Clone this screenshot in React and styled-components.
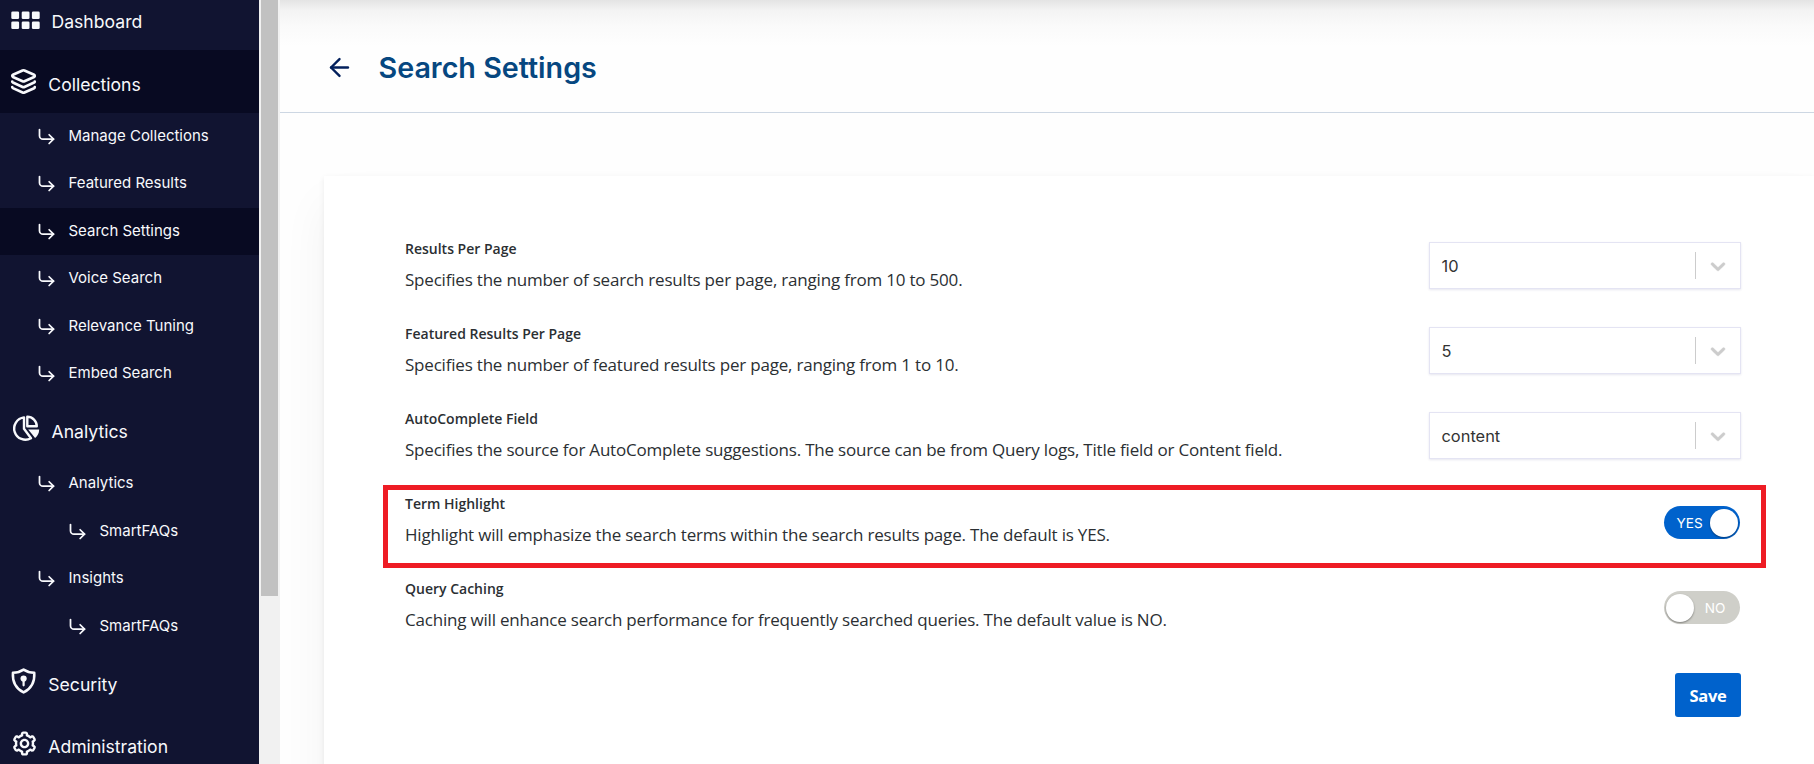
import React, { Component } from 'react'
import styled, { createGlobalStyle, css } from 'styled-components'
import { ArrowLeft, CornerDownRight, Layers } from 'lucide-react'
import { BiCog } from 'react-icons/bi'

const GlobalStyle = createGlobalStyle`
  * {
    box-sizing: border-box;
  }
  body {
    margin: 0;
    overflow: hidden;
    background: #fefefe;
    font-family: Inter, 'Liberation Sans', sans-serif;
  }
`

const Page = styled.div`
  display: flex;
  height: 764px;
  overflow: hidden;
`

const Sidebar = styled.nav`
  flex: 0 0 259px;
  overflow: hidden;
  background: #111431;
  color: #f8f9fc;
`

const MenuList = styled.div`
  margin-top: -12.5px;
`

const MenuHead = styled.div`
  display: flex;
  align-items: center;
  height: 62.5px;
  padding-left: 10px;
  background: ${p => p.$active ? '#080a22' : 'transparent'};
  font-size: 17.6px;
  line-height: 24px;
  svg {
    flex: none;
  }
`

const HeadIcon = styled.span`
  display: flex;
  flex: 0 0 ${p => p.$wide ? 41.5 : 38.3}px;
`

const HeadText = styled.span`
  padding-top: 7px;
`

const MenuItem = styled.div`
  display: flex;
  align-items: center;
  height: 47.5px;
  padding-left: ${p => p.$nested ? 66.5 : 35.5}px;
  background: ${p => p.$active ? '#080a22' : 'transparent'};
  font-size: 15px;
  line-height: 20px;
  svg {
    flex: none;
    margin-right: 12px;
  }
`

const ItemText = styled.span`
  padding-bottom: 1px;
`

const ScrollTrack = styled.div`
  flex: 0 0 21px;
  padding: 0 2px;
  background: #f1f1f1;
`

const ScrollThumb = styled.div`
  width: 17px;
  height: 596px;
  background: #c1c1c1;
`

const Main = styled.main`
  flex: 1;
  min-width: 0;
`

const Header = styled.header`
  display: flex;
  align-items: center;
  height: 113px;
  padding: 22px 0 0 45px;
  border-bottom: 1px solid #cdd7e3;
  background: linear-gradient(#e4e4e4, #f3f3f3 10px, #fafafa 25px, #fefefe 46px);
  color: #03205c;
`

const Title = styled.h1`
  margin: 2px 0 0 24.5px;
  color: #064780;
  font-size: 28.7px;
  font-weight: 600;
  line-height: 40px;
`

const Card = styled.section`
  height: 700px;
  margin: 63px 0 0 44px;
  padding: 57px 73px 0 81px;
  background: #fff;
  box-shadow: 0 28px 44px rgba(0, 0, 0, 0.05), 0 2px 6px rgba(0, 0, 0, 0.07);
`

const Row = styled.div`
  position: relative;
  display: flex;
  justify-content: space-between;
  align-items: flex-start;
  height: 85px;
  padding-top: 3px;
`

const Highlight = styled.div`
  position: absolute;
  top: -3px;
  right: -25px;
  bottom: 5px;
  left: -22px;
  border: 5px solid #ee1c24;
`

const Label = styled.div`
  color: #2b2f33;
  font: 600 14px/26px 'Open Sans', sans-serif;
`

const Description = styled.div`
  color: #2b2f33;
  font: 400 17px/36px 'Open Sans', sans-serif;
  letter-spacing: -0.2px;
  white-space: nowrap;
`

const SelectBox = styled.div`
  display: flex;
  align-items: center;
  width: 312px;
  height: 47px;
  margin-top: 6px;
  padding-left: 11.5px;
  border: 1px solid #e4e4f3;
  box-shadow: 0 1px 2px rgba(60, 60, 130, 0.12);
  background: #fff;
  color: #333;
  font-size: 16.4px;
`

const SelectValue = styled.span`
  flex: 1;
`

const Indicator = styled.span`
  display: flex;
  justify-content: center;
  align-items: center;
  width: 45px;
  height: 27px;
  border-left: 1px solid #ccc;
  svg {
    fill: #ccc;
    stroke: #ccc;
    stroke-width: 0.4;
  }
`

const Toggle = styled.div`
  display: flex;
  align-items: center;
  justify-content: space-between;
  width: 76px;
  height: 33px;
  margin: 15px 1px 0 0;
  padding: 0 2px 0 12.5px;
  border-radius: 17px;
  background: #0062cc;
  color: #fff;
  font-size: 13.6px;
  ${p => !p.$on && css`
    flex-direction: row-reverse;
    padding: 0 14.5px 0 2px;
    background: #cfcfc9;
  `}
`

const Knob = styled.span`
  width: 28px;
  height: 28px;
  border-radius: 50%;
  background: #fff;
  box-shadow: 0 1px 2px rgba(0, 0, 0, 0.4);
`

const Actions = styled.div`
  display: flex;
  justify-content: flex-end;
  padding-top: 15px;
`

const SaveButton = styled.button`
  width: 66px;
  height: 44px;
  padding: 0;
  border: 0;
  border-radius: 3px;
  background: #0062cc;
  color: #fff;
  font: 700 16.5px 'Open Sans', sans-serif;
  letter-spacing: -0.3px;
`

const GridIcon = () => (
  <svg width='30' height='30' viewBox='0 0 30 30' fill='currentColor'>
    {[1.3, 11.7, 21.9].map(x => [7.5, 17.5].map(y => (
      <rect key={x + '-' + y} x={x} y={y} width='7.8' height='7.6' rx='1.3' />
    )))}
  </svg>
)

const PieIcon = () => (
  <svg width='30' height='30' viewBox='0 0 30 30' fill='none' stroke='currentColor' strokeWidth='2.4' strokeLinejoin='round'>
    <path d='M14 3.4v11.4l7 9.4A11.2 11.2 0 1 1 14 3.4z' />
    <path d='M17.3 2.8v9.5h9.5a9.5 9.5 0 0 0-9.5-9.5z' />
    <path d='M18.2 15.6h11a11 11 0 0 1-4.1 8.4z' fill='currentColor' stroke='none' />
  </svg>
)

const ShieldIcon = () => (
  <svg width='28' height='28' viewBox='0 0 28 28' fill='none' stroke='currentColor' strokeWidth='2.5' strokeLinejoin='round'>
    <path d='M13.6 2.6c3 2 6.5 3 10.7 3.2.5 8-2.5 15.5-10.7 19.6C5.4 21.3 2.4 13.8 2.9 5.8 7.1 5.6 10.6 4.6 13.6 2.6z' />
    <circle cx='13.6' cy='11.6' r='3.1' fill='currentColor' stroke='none' />
    <path d='M13.6 12v6.3' strokeLinecap='round' strokeWidth='2.2' />
  </svg>
)

const Chevron = () => (
  <svg width='24' height='24' viewBox='0 0 20 20'>
    <path d='M4.516 7.548c0.436-0.446 1.043-0.481 1.576 0l3.908 3.747 3.908-3.747c0.533-0.481 1.141-0.446 1.574 0 0.436 0.445 0.408 1.197 0 1.615-0.406 0.418-4.695 4.502-4.695 4.502-0.217 0.223-0.502 0.335-0.787 0.335s-0.570-0.112-0.789-0.335c0 0-4.287-4.084-4.695-4.502s-0.436-1.170 0-1.615z' />
  </svg>
)

const menu = [
  { name: 'Dashboard', icon: <GridIcon />, wide: true, items: [] },
  {
    name: 'Collections',
    icon: <Layers size={27} strokeWidth={2.4} />,
    active: true,
    items: [
      { name: 'Manage Collections' },
      { name: 'Featured Results' },
      { name: 'Search Settings', active: true },
      { name: 'Voice Search' },
      { name: 'Relevance Tuning' },
      { name: 'Embed Search' }
    ]
  },
  {
    name: 'Analytics',
    icon: <PieIcon />,
    wide: true,
    items: [
      { name: 'Analytics' },
      { name: 'SmartFAQs', nested: true },
      { name: 'Insights' },
      { name: 'SmartFAQs', nested: true }
    ]
  },
  { name: 'Security', icon: <ShieldIcon />, items: [] },
  { name: 'Administration', icon: <BiCog size={29} />, items: [] }
]

const settings = [
  {
    label: 'Results Per Page',
    text: 'Specifies the number of search results per page, ranging from 10 to 500.',
    value: '10'
  },
  {
    label: 'Featured Results Per Page',
    text: 'Specifies the number of featured results per page, ranging from 1 to 10.',
    value: '5'
  },
  {
    label: 'AutoComplete Field',
    text: 'Specifies the source for AutoComplete suggestions. The source can be from Query logs, Title field or Content field.',
    value: 'content'
  },
  {
    label: 'Term Highlight',
    text: 'Highlight will emphasize the search terms within the search results page. The default is YES.',
    value: true,
    highlight: true
  },
  {
    label: 'Query Caching',
    text: 'Caching will enhance search performance for frequently searched queries. The default value is NO.',
    value: false
  }
]

const Select = ({ value }) => (
  <SelectBox>
    <SelectValue>{value}</SelectValue>
    <Indicator><Chevron /></Indicator>
  </SelectBox>
)

const Switch = ({ on }) => (
  <Toggle $on={on}>
    <span>{on ? 'YES' : 'NO'}</span>
    <Knob />
  </Toggle>
)

class App extends Component {
  renderSection (section) {
    return (
      <div key={section.name}>
        <MenuHead $active={section.active}>
          <HeadIcon $wide={section.wide}>{section.icon}</HeadIcon>
          <HeadText>{section.name}</HeadText>
        </MenuHead>
        {section.items.map((item, i) => (
          <MenuItem key={i} $active={item.active} $nested={item.nested}>
            <CornerDownRight size={21} strokeWidth={2} />
            <ItemText>{item.name}</ItemText>
          </MenuItem>
        ))}
      </div>
    )
  }

  render () {
    return (
      <Page>
        <GlobalStyle />
        <Sidebar>
          <MenuList>{menu.map(this.renderSection)}</MenuList>
        </Sidebar>
        <ScrollTrack>
          <ScrollThumb />
        </ScrollTrack>
        <Main>
          <Header>
            <ArrowLeft size={29} strokeWidth={2} />
            <Title>Search Settings</Title>
          </Header>
          <Card>
            {settings.map(row => (
              <Row key={row.label}>
                <div>
                  <Label>{row.label}</Label>
                  <Description>{row.text}</Description>
                </div>
                {typeof row.value === 'boolean'
                  ? <Switch on={row.value} />
                  : <Select value={row.value} />}
                {row.highlight && <Highlight />}
              </Row>
            ))}
            <Actions>
              <SaveButton>Save</SaveButton>
            </Actions>
          </Card>
        </Main>
      </Page>
    )
  }
}

export default App
